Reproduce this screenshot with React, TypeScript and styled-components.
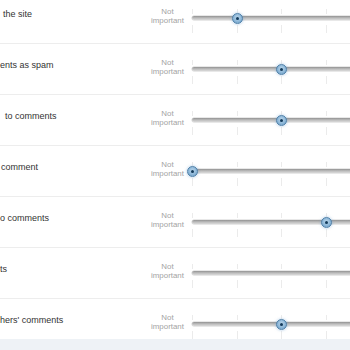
import React from "react";
import styled, { createGlobalStyle } from "styled-components";

const Global = createGlobalStyle`
  html, body { margin: 0; padding: 0; background: #ffffff; overflow: hidden; }
  body { width: 350px; height: 350px; font-family: "Liberation Sans", Arial, Helvetica, sans-serif; }
`;

const Page = styled.div`
  width: 350px;
  height: 350px;
  overflow: hidden;
  display: flex;
  flex-direction: column;
`;

const List = styled.div`
  margin-top: -7px;
  display: flex;
  flex-direction: column;
`;

const Row = styled.div<{ $last?: boolean }>`
  display: grid;
  grid-template-columns: 148px 39px 1fr;
  align-items: start;
  height: ${(p) => (p.$last ? 40 : 50)}px;
  border-bottom: ${(p) => (p.$last ? "none" : "1px solid #ededed")};
`;

const Label = styled.div<{ $indent: number }>`
  padding-top: 15px;
  padding-left: ${(p) => p.$indent}px;
  font-size: 9px;
  line-height: 12px;
  color: #333333;
  white-space: nowrap;
`;

const Importance = styled.div`
  padding-top: 14px;
  font-size: 7.9px;
  line-height: 9px;
  color: #a3a3a3;
  text-align: center;
  white-space: nowrap;
`;

const SliderArea = styled.div`
  position: relative;
  height: 50px;
  padding-left: 5px;
`;

const Track = styled.div`
  position: absolute;
  left: 5px;
  top: 23px;
  width: 224px;
  height: 4px;
  border-radius: 2px;
  background: linear-gradient(#929292, #bdbdbd 50%, #d9d9d9);
  box-shadow: 0 0 0 0.5px rgba(120, 120, 120, 0.35);
`;

const Tick = styled.div`
  position: absolute;
  top: 16px;
  width: 1px;
  height: 24px;
  background: linear-gradient(
    #ebebeb 0%,
    #ebebeb 20%,
    transparent 20%,
    transparent 65%,
    #ebebeb 65%,
    #ebebeb 100%
  );
`;

const Thumb = styled.div`
  position: absolute;
  top: 19.5px;
  width: 11px;
  height: 11px;
  margin-left: -5.5px;
  border-radius: 50%;
  box-sizing: border-box;
  border: 1px solid #4d7fa8;
  background: radial-gradient(circle at 50% 40%, #b9d5ea 0%, #8db7d8 55%, #6b9bc4 100%);
  box-shadow: 0 0 3px rgba(110, 160, 210, 0.6);
  display: flex;
  align-items: center;
  justify-content: center;
`;

const Dot = styled.div`
  width: 3px;
  height: 3px;
  border-radius: 50%;
  background: #123a5a;
`;

const Footer = styled.div`
  flex: 1;
  background: #eef2f6;
`;

const STEP = 44.67;
const STOPS = [0, 1, 2, 3, 4, 5];

type Item = { text: string; indent: number; value: number };

const items: Item[] = [
  { text: "the site", indent: 3, value: 1 },
  { text: "ents as spam", indent: 0, value: 2 },
  { text: "to comments", indent: 5, value: 2 },
  { text: "comment", indent: 1, value: 0 },
  { text: "o comments", indent: 0, value: 3 },
  { text: "ts", indent: 0, value: 5 },
  { text: "hers' comments", indent: 0, value: 2 },
];

function Slider({ value }: { value: number }) {
  return (
    <SliderArea>
      {STOPS.map((s) => (
        <Tick key={s} style={{ left: 5 + s * STEP }} />
      ))}
      <Track />
      <Thumb style={{ left: 5.5 + value * STEP }}>
        <Dot />
      </Thumb>
    </SliderArea>
  );
}

export default function App() {
  return (
    <Page>
      <Global />
      <List>
        {items.map((it, i) => (
          <Row key={i} $last={i === items.length - 1}>
            <Label $indent={it.indent}>{it.text}</Label>
            <Importance>
              Not
              <br />
              important
            </Importance>
            <Slider value={it.value} />
          </Row>
        ))}
      </List>
      <Footer />
    </Page>
  );
}
